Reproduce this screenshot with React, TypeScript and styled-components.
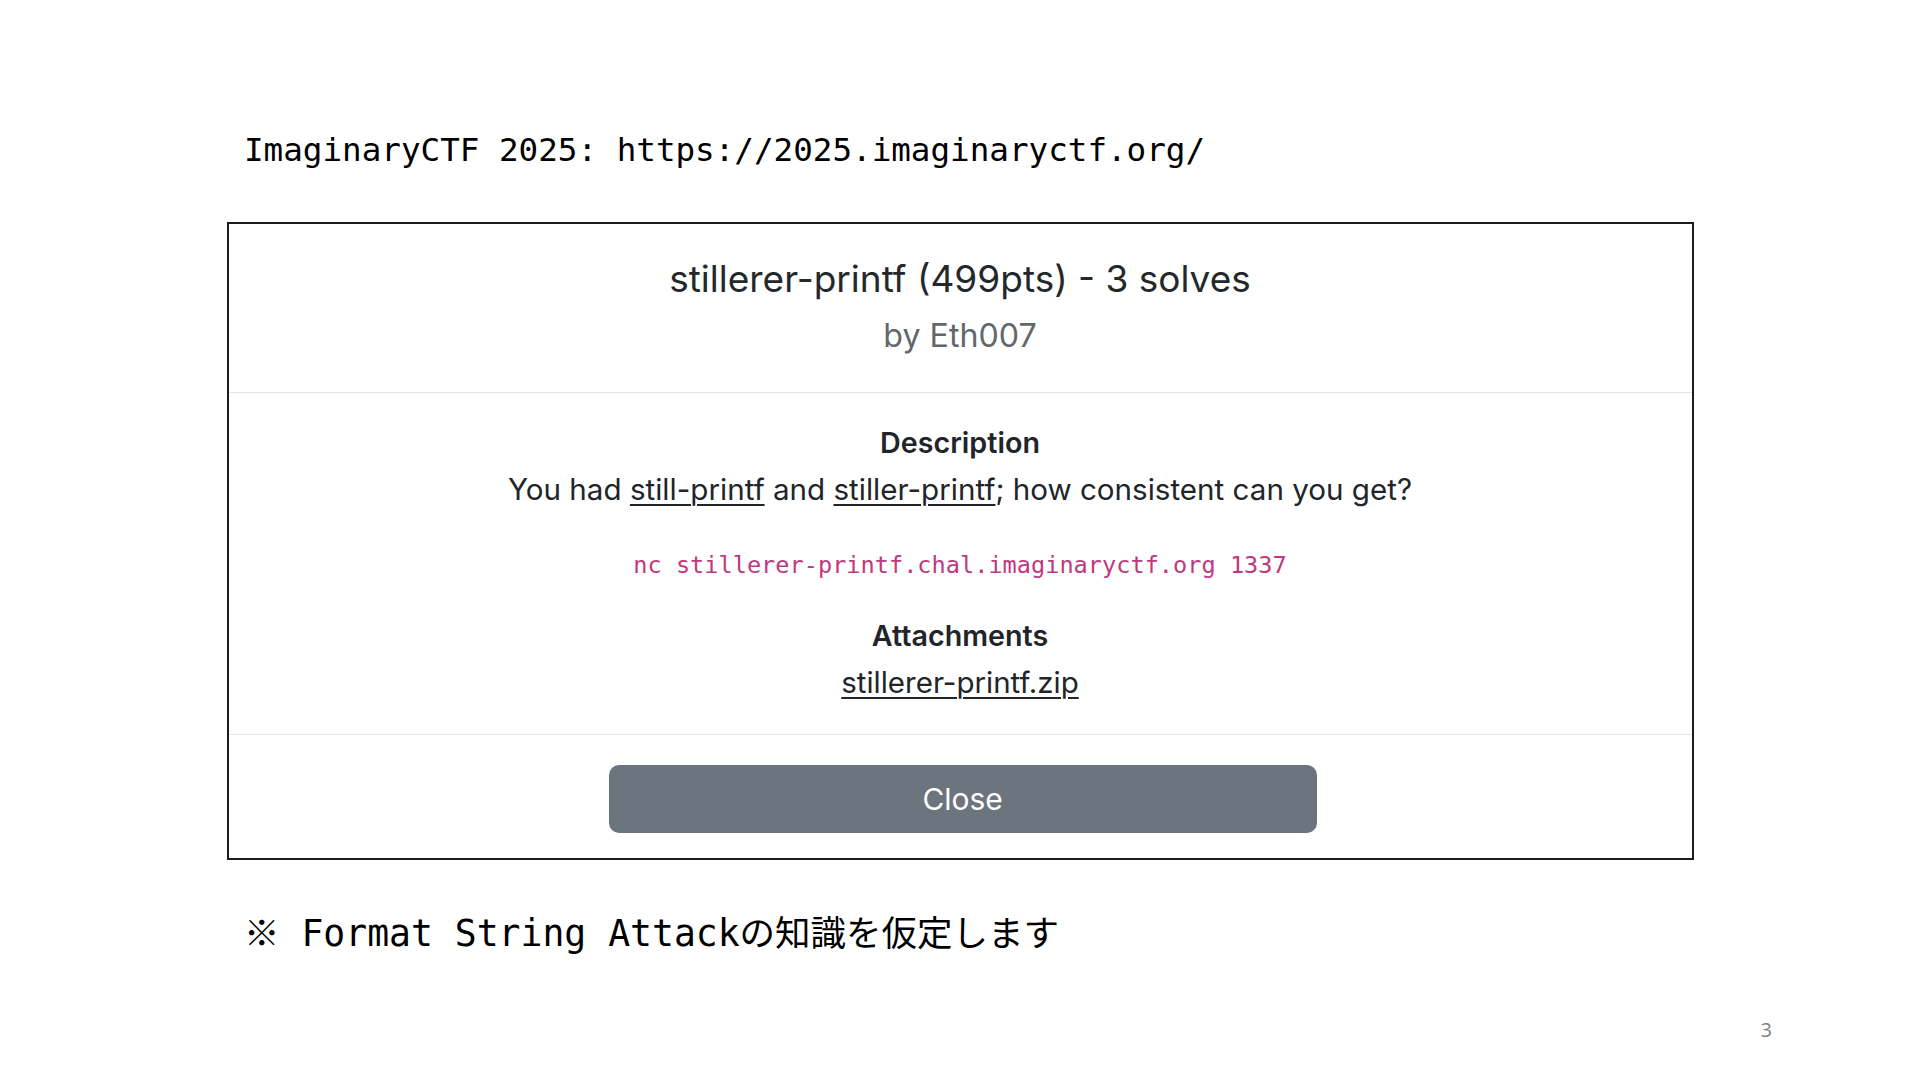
import styled, {createGlobalStyle} from "styled-components";


const Global = createGlobalStyle`
  html, body {
    margin: 0;
    padding: 0;
    background: #ffffff;
  }
`

const Slide = styled.div`
  width: 1920px;
  height: 1080px;
  display: flex;
  flex-direction: column;
  background: #ffffff;
  overflow: hidden;
`;

const MonoLine = styled.div<{ $top: number; $size: number }>`
  margin-top: ${p => p.$top}px;
  padding-left: 244px;
  font-family: "DejaVu Sans Mono", "Liberation Mono", "Noto Sans CJK JP", monospace;
  font-size: ${p => p.$size}px;
  line-height: 48px;
  color: #000000;
  white-space: pre;
`;

const Jp = styled.span`
  font-family: "Noto Sans CJK JP", sans-serif;
  font-size: 35.5px;
`;

const Modal = styled.div`
  box-sizing: border-box;
  margin: 48px 0 0 226.5px;
  width: 1467px;
  border: 2px solid #1c1c1c;
  background: #ffffff;
  font-family: Inter, "Liberation Sans", sans-serif;
  color: #212529;
  text-align: center;
`;

const Section = styled.div<{ $pad: string; $last?: boolean }>`
  padding: ${p => p.$pad};
  border-bottom: ${p => (p.$last ? "none" : "1px solid #e3e5e8")};
  display: flex;
  flex-direction: column;
  align-items: center;
`;

const Heading = styled.div`
  font-size: 37px;
  line-height: 46px;
  font-weight: 400;
  color: #25282b;
`;

const Author = styled.div`
  margin-top: 13.5px;
  font-size: 32.2px;
  line-height: 40px;
  color: #62676d;
`;

const Label = styled.div<{ $gap?: number }>`
  margin-top: ${p => p.$gap || 0}px;
  font-size: 28.7px;
  line-height: 40px;
  font-weight: 600;
  color: #212529;
`;

const Text = styled.div`
  margin-top: 6px;
  font-size: 29.6px;
  line-height: 40px;
`;

const Link = styled.a`
  color: #212529;
  text-decoration: underline;
  text-decoration-thickness: 2px;
  text-underline-offset: 4px;
`;

const Code = styled.div`
  margin-top: 40px;
  font-family: "DejaVu Sans Mono", "Liberation Mono", monospace;
  font-size: 23.6px;
  line-height: 32px;
  color: #c0387e;
`;

const File = styled(Link)`
  margin-top: 5.5px;
  font-size: 29.5px;
  line-height: 40px;
`;

const CloseButton = styled.button`
  box-sizing: border-box;
  width: 708px;
  height: 68.6px;
  margin-left: 5px;
  border: none;
  border-radius: 10px;
  background: #6c757d;
  color: #ffffff;
  font-family: Inter, "Liberation Sans", sans-serif;
  font-size: 29.9px;
  cursor: pointer;
`;

const PageNum = styled.div`
  margin-top: auto;
  margin-bottom: 40px;
  align-self: flex-end;
  margin-right: 148px;
  font-family: "Open Sans", "Liberation Sans", sans-serif;
  font-size: 20px;
  line-height: 20px;
  color: #7f7f7f;
`;


export default function App() {
  return (
    <Slide>
      <Global/>
      <MonoLine $top={126} $size={32.6}>ImaginaryCTF 2025: https://2025.imaginaryctf.org/</MonoLine>
      
      <Modal>
        <Section $pad="32px 0 36.5px">
          <Heading>stillerer-printf (499pts) - 3 solves</Heading>
          <Author>by Eth007</Author>
        </Section>
        
        <Section $pad="30px 0 32.5px">
          <Label>Description</Label>
          <Text>
            You had <Link href="#">still-printf</Link> and <Link href="#">stiller-printf</Link>; how consistent can you get?
          </Text>
          <Code>nc stillerer-printf.chal.imaginaryctf.org 1337</Code>
          <Label $gap={35}>Attachments</Label>
          <File href="#">stillerer-printf.zip</File>
        </Section>
        
        <Section $pad="29.5px 0 25px" $last>
          <CloseButton>Close</CloseButton>
        </Section>
      </Modal>
      
      <MonoLine $top={47} $size={36.4}><Jp>※</Jp> Format String Attack<Jp>の知識を仮定します</Jp></MonoLine>
      
      <PageNum>3</PageNum>
    </Slide>
  );
}
